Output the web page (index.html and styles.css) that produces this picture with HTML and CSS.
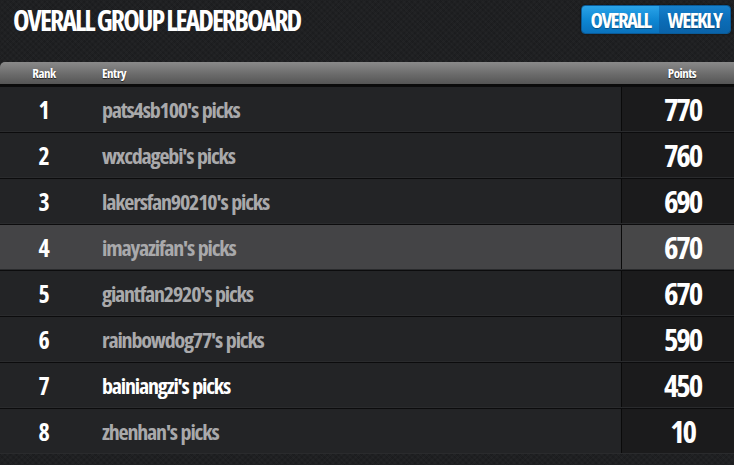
FILE: index.html
```html
<!DOCTYPE html>
<html>
<head>
<meta charset="utf-8">
<title>Overall Group Leaderboard</title>
<link rel="stylesheet" href="styles.css">
</head>
<body>
<div class="page">
  <header class="top">
    <h1 class="title">OVERALL GROUP LEADERBOARD</h1>
    <div class="toggle">
      <span class="seg seg-overall">OVERALL</span>
      <span class="seg seg-weekly">WEEKLY</span>
    </div>
  </header>
  <div class="board">
    <div class="row head">
      <div class="rank">Rank</div>
      <div class="entry">Entry</div>
      <div class="pts">Points</div>
    </div>
    <div class="row"><div class="rank">1</div><div class="entry">pats4sb100's picks</div><div class="pts">770</div></div>
    <div class="row"><div class="rank">2</div><div class="entry">wxcdagebi's picks</div><div class="pts">760</div></div>
    <div class="row"><div class="rank">3</div><div class="entry">lakersfan90210's picks</div><div class="pts">690</div></div>
    <div class="row hl"><div class="rank">4</div><div class="entry">imayazifan's picks</div><div class="pts">670</div></div>
    <div class="row"><div class="rank">5</div><div class="entry">giantfan2920's picks</div><div class="pts">670</div></div>
    <div class="row"><div class="rank">6</div><div class="entry">rainbowdog77's picks</div><div class="pts">590</div></div>
    <div class="row me"><div class="rank">7</div><div class="entry">bainiangzi's picks</div><div class="pts">450</div></div>
    <div class="row"><div class="rank">8</div><div class="entry">zhenhan's picks</div><div class="pts">10</div></div>
  </div>
</div>
</body>
</html>
```
FILE: styles.css
```css
* { box-sizing: border-box; }
html, body { margin: 0; padding: 0; }
body {
  background-color: #1d1e20;
  background-image:
    repeating-linear-gradient(45deg, rgba(255,255,255,0.012) 0 2px, rgba(0,0,0,0.02) 2px 4px),
    repeating-linear-gradient(-45deg, rgba(255,255,255,0.012) 0 2px, rgba(0,0,0,0.02) 2px 4px);
  font-family: "Open Sans", "DejaVu Sans", sans-serif;
  font-stretch: 75%;
  font-weight: 700;
  color: #fff;
  width: 734px;
  height: 465px;
  overflow: hidden;
}
.page { display: flex; flex-direction: column; }

.top {
  height: 62px;
  display: flex;
  justify-content: space-between;
  align-items: flex-start;
  padding: 5px 3px 0 13px;
}
.title {
  margin: 0;
  font-size: 28px;
  line-height: 30px;
  letter-spacing: -2px;
  font-weight: 700;
  color: #fff;
}
.toggle {
  display: flex;
  height: 29px;
  border-radius: 4px;
  overflow: hidden;
  border: 1px solid #0a5b98;
  box-shadow: 0 0 2px rgba(0,0,0,0.6);
}
.seg {
  display: flex;
  align-items: center;
  justify-content: center;
  font-size: 21px;
  letter-spacing: -1.6px;
  color: #fff;
  text-shadow: 0 1px 1px rgba(0,0,0,0.35);
}
.seg-overall {
  width: 77px;
  background: linear-gradient(#2aa3e8, #0d86d2 55%, #0a72bd);
}
.seg-weekly {
  width: 71px;
  background: linear-gradient(#1680cc, #0b6cb6 55%, #0a63a9);
}

.board { display: flex; flex-direction: column; }
.row {
  display: grid;
  grid-template-columns: 88px 1fr 113px;
  height: 46px;
  background: #232426;
  border-top: 1px solid #0c0c0d;
  border-bottom: 1px solid #2a2b2d;
}
.row > div { display: flex; align-items: center; }
.rank { justify-content: center; font-size: 24px; letter-spacing: -0.5px; color: #fff; }
.entry {
  padding-left: 14px;
  font-size: 22px;
  letter-spacing: -1.2px;
  word-spacing: 1px;
  color: #a9a9ab;
}
.pts {
  justify-content: center;
  padding-left: 9px;
  font-size: 31px;
  letter-spacing: -2.2px;
  color: #fff;
  background: #1b1b1c;
  border-left: 1px solid #0a0a0a;
}
.row.hl { background: #444446; }
.row.hl .pts { background: #474748; }
.row.me .entry { color: #fff; }

.row.head {
  height: 24px;
  border-radius: 5px 0 0 0;
  border-top: none;
  border-bottom: 2px solid #0b0b0b;
  background: linear-gradient(#8a8a8a, #6e6e6e 50%, #555);
}
.row.head > div {
  font-size: 13px;
  letter-spacing: -0.5px;
  color: #fff;
  text-shadow: 0 1px 1px rgba(0,0,0,0.7);
  background: none;
  border: none;
}
.row.head .entry { color: #fff; }
.row.head .pts { padding-left: 9px; }
```
